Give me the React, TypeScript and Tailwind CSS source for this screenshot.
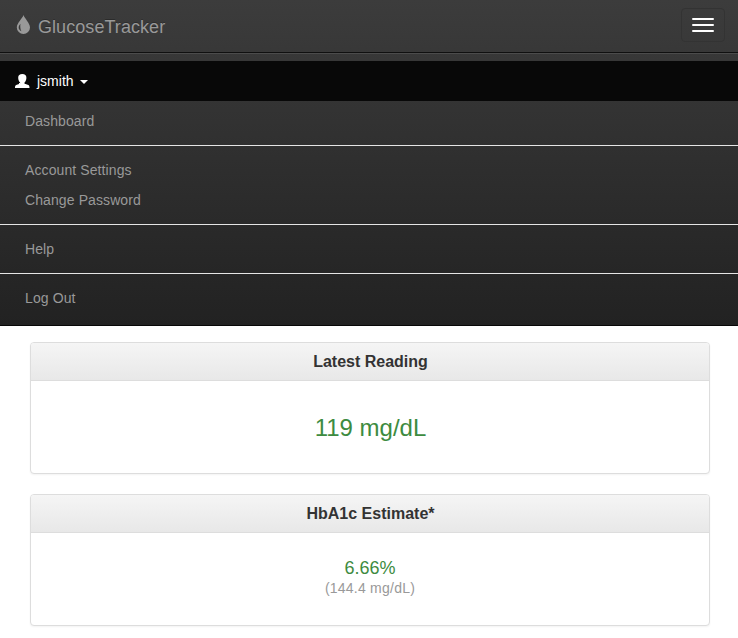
import type { ReactNode } from "react";

const menuGroups = [
  ["Dashboard"],
  ["Account Settings", "Change Password"],
  ["Help"],
  ["Log Out"],
];

function DropIcon() {
  return (
    <svg className="mt-[15px] h-[19px] w-[15px] shrink-0" viewBox="0 0 15 19" fill="currentColor">
      <path
        fillRule="evenodd"
        d="M7.5 0C8.6 3.600 14 8 14 12.500a6.600 6.400 0 0 1-13.200 0C.8 8 6.400 3.600 7.500 0ZM4.500 8.800C2.200 11 1.700 14.500 5.400 16.200 4.200 13.800 4 11.600 4.500 8.800Z"
      />
    </svg>
  );
}

function UserIcon() {
  return (
    <svg className="-mt-px h-[14px] w-[15px] shrink-0" viewBox="0 0 15 14" fill="currentColor">
      <path d="M7.300 0c2.600 0 4.100 1.200 4.100 3.700 0 2.200-.8 3.700-1.900 4.900v1c0 .6 3.300.9 4.300 1.700.5.400.7 1.300.7 2.700H0c0-1.400.2-2.300.8-2.700 1-.8 4.300-1.100 4.300-1.700v-1C4 7.400 3.200 5.900 3.200 3.700 3.200 1.200 4.700 0 7.300 0Z" />
    </svg>
  );
}

function Panel({ title, children }: { title: string; children: ReactNode }) {
  return (
    <section className="flex h-[132px] flex-col overflow-hidden rounded border border-[#ddd] bg-white text-center shadow-[0_1px_2px_rgba(0,0,0,0.05)]">
      <h3 className="h-[38px] shrink-0 border-b border-[#ddd] bg-linear-to-b from-[#f5f5f5] to-[#e8e8e8] pl-px text-[16px] leading-[37px] font-bold text-[#333]">
        {title}
      </h3>
      {children}
    </section>
  );
}

export default function App() {
  return (
    <div className="h-[638px] overflow-hidden bg-white font-['Liberation_Sans',Arial,sans-serif] text-[14px] leading-5">
      <nav className="flex h-[326px] flex-col border-b border-[#080808] bg-linear-to-b from-[#3c3c3c] to-[#222] text-[#999]">
        <header className="flex h-[52px] shrink-0 items-start justify-between pr-[13px] pl-[16px]">
          <a className="flex text-[18px] leading-[54px] tracking-[0.06px] [text-shadow:0_-1px_0_rgba(0,0,0,0.25)]">
            <DropIcon />
            <span className="ml-[7px]">GlucoseTracker</span>
          </a>
          <button
            aria-label="Toggle navigation"
            className="mt-2 flex h-[34px] w-11 flex-col items-center justify-center gap-1 rounded border border-[#333]"
          >
            <span className="h-0.5 w-[22px] rounded-[1px] bg-white" />
            <span className="h-0.5 w-[22px] rounded-[1px] bg-white" />
            <span className="h-0.5 w-[22px] rounded-[1px] bg-white" />
          </button>
        </header>
        <div className="h-[9px] shrink-0 border-t border-[#101010] shadow-[inset_0_1px_0_rgba(255,255,255,0.1)]" />
        <a className="flex h-10 shrink-0 items-center bg-[#080808] pl-[15px] text-white">
          <UserIcon />
          <span className="ml-[7px]">jsmith</span>
          <span className="mt-0.5 ml-[6px] border-x-4 border-t-4 border-x-transparent border-t-white" />
        </a>
        <div className="divide-y divide-[#e5e5e5] tracking-[0.1px]">
          {menuGroups.map((group, i) => (
            <ul key={group[0]} className={i === 0 ? "pt-[5px] pb-[9px]" : "py-[9px]"}>
              {group.map((label) => (
                <li key={label} className="h-[30px] py-[5px] pl-[25px]">
                  {label}
                </li>
              ))}
            </ul>
          ))}
        </div>
      </nav>
      <main className="flex flex-col gap-5 pt-4 pr-[28px] pl-[30px]">
        <Panel title="Latest Reading">
          <p className="pt-[34px] pl-px text-[24px] leading-[26px] text-[#3d8b40]">119 mg/dL</p>
        </Panel>
        <Panel title="HbA1c Estimate*">
          <p className="pt-[25px] text-[18px] leading-5 text-[#3d8b40]">6.66%</p>
          <p className="text-[14px] leading-5 tracking-[0.23px] text-[#999]">(144.4 mg/dL)</p>
        </Panel>
      </main>
    </div>
  );
}
